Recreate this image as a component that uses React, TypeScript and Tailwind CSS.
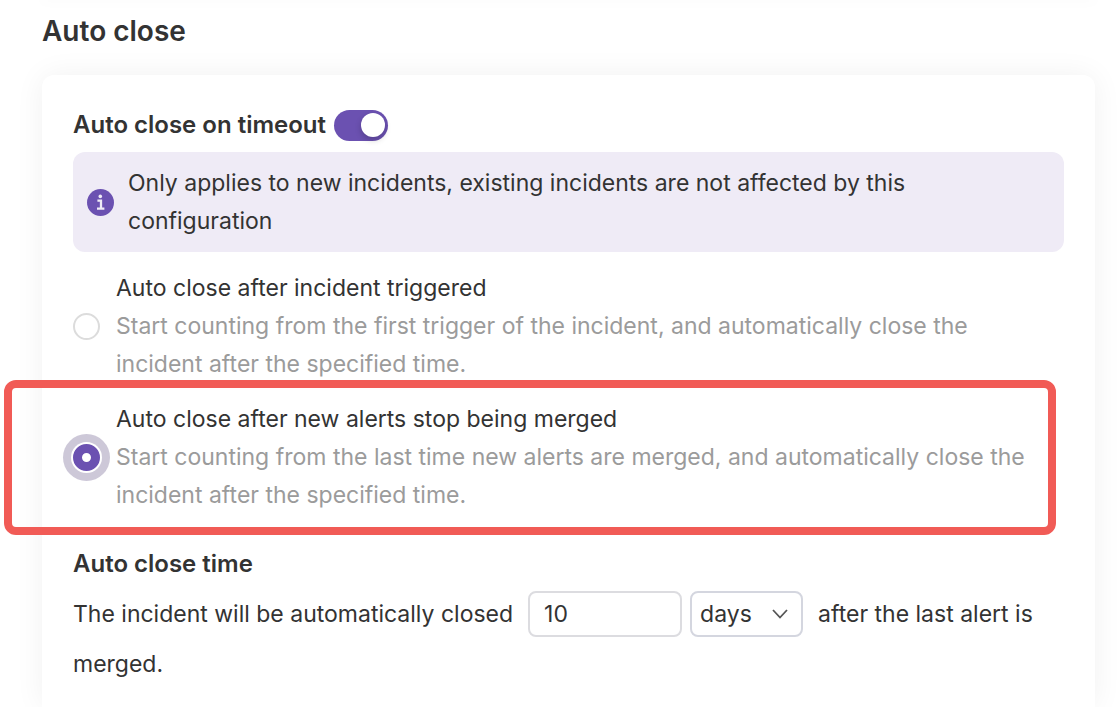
import { useState } from 'react';
import type { ReactNode } from 'react';

type CloseMode = 'triggered' | 'merged';

interface OptionProps {
  value: CloseMode;
  selected: CloseMode;
  title: string;
  description: string;
  onSelect: (value: CloseMode) => void;
  children?: ReactNode;
}

function Option({ value, selected, title, description, onSelect, children }: OptionProps) {
  return (
    <div className="relative">
      <label className="flex items-center gap-4 pr-6">
        <input
          type="radio"
          name="close-mode"
          value={value}
          checked={selected === value}
          onChange={() => onSelect(value)}
          className="m-0 size-[27px] shrink-0 appearance-none rounded-full border-2 border-[#dcdcdc] bg-white checked:border-[9px] checked:border-[#6b51b1] checked:shadow-[0_0_0_2px_#fff,0_0_0_10px_#cdc8d8]"
        />
        <span>
          <span className="block">{title}</span>
          <span className="block text-[#9b9b9b]">{description}</span>
        </span>
      </label>
      {children}
    </div>
  );
}

function InfoIcon() {
  return (
    <svg className="size-[27px] shrink-0" viewBox="0 0 27 27" aria-hidden="true">
      <circle cx="13.5" cy="13.5" r="13.5" fill="#6b51b1" />
      <circle cx="13.3" cy="7.4" r="1.8" fill="#efebf6" />
      <path d="M10.4 11.6h3.6v8M10 19.6h7.4" fill="none" stroke="#efebf6" strokeWidth="2.3" />
    </svg>
  );
}

export default function App() {
  const [enabled, setEnabled] = useState(true);
  const [mode, setMode] = useState<CloseMode>('merged');
  const [amount, setAmount] = useState('10');
  const [unit, setUnit] = useState('days');

  return (
    <main className="flex min-h-screen flex-col overflow-hidden bg-white pr-[25px] pl-[42px] font-['Inter','Liberation_Sans',sans-serif] text-[23px] leading-[38px] text-[#333]">
      <div className="h-0 shadow-[0_0_12px_2px_rgba(0,0,0,0.03)]" />
      <h1 className="pt-3 text-[28px] font-semibold">Auto close</h1>

      <section className="mt-[25px] flex-1 rounded-t-xl bg-white px-[31px] pt-[31px] pb-4 shadow-[0_0_30px_rgba(0,0,0,0.06)]">
        <div className="flex items-center gap-2">
          <h2 id="timeout-label" className="text-2xl leading-[38px] font-semibold">
            Auto close on timeout
          </h2>
          <button
            type="button"
            role="switch"
            aria-checked={enabled}
            aria-labelledby="timeout-label"
            onClick={() => setEnabled(!enabled)}
            className={
              enabled
                ? 'flex h-[31px] w-[54px] items-center justify-end rounded-full bg-[#6b51b1] px-[3px]'
                : 'flex h-[31px] w-[54px] items-center justify-start rounded-full bg-[#cfcfcf] px-[3px]'
            }
          >
            <span className="size-6 rounded-full bg-white shadow-[0_3px_6px_rgba(0,0,0,0.2)]" />
          </button>
        </div>

        <div className="mt-2 flex items-center gap-[14px] rounded-xl bg-[#efebf6] py-3 pr-24 pl-[14px]">
          <InfoIcon />
          <p>Only applies to new incidents, existing incidents are not affected by this configuration</p>
        </div>

        <div className="mt-[17px] flex flex-col gap-[17px]">
          <Option
            value="triggered"
            selected={mode}
            onSelect={setMode}
            title="Auto close after incident triggered"
            description="Start counting from the first trigger of the incident, and automatically close the incident after the specified time."
          />
          <Option
            value="merged"
            selected={mode}
            onSelect={setMode}
            title="Auto close after new alerts stop being merged"
            description="Start counting from the last time new alerts are merged, and automatically close the incident after the specified time."
          >
            <div className="pointer-events-none absolute -top-5 right-2 -bottom-[21px] -left-[69px] rounded-xl border-8 border-[#f15b56]" />
          </Option>
        </div>

        <h2 className="mt-[31px] text-2xl leading-[38px] font-semibold">Auto close time</h2>
        <div className="mt-2 flex flex-wrap items-center">
          <label htmlFor="close-amount">The incident will be automatically closed</label>
          <input
            id="close-amount"
            type="text"
            value={amount}
            onChange={(e) => setAmount(e.target.value)}
            className="ml-[15px] h-[46px] w-[154px] rounded-lg border-2 border-[#dcdce0] bg-white px-[14px]"
          />
          <div className="relative ml-2">
            <select
              aria-label="Time unit"
              value={unit}
              onChange={(e) => setUnit(e.target.value)}
              className="block h-[46px] w-[113px] appearance-none rounded-lg border-2 border-[#d4d6df] bg-white px-2"
            >
              <option>days</option>
              <option>hours</option>
            </select>
            <svg
              className="pointer-events-none absolute top-[17px] right-[15px] h-3 w-4"
              viewBox="0 0 16 12"
              fill="none"
              stroke="#555"
              strokeWidth="1.8"
              aria-hidden="true"
            >
              <path d="M1 2l7 7.5L15 2" />
            </svg>
          </div>
          <span className="ml-[15px]">after the last alert is</span>
          <span className="mt-2">merged.</span>
        </div>
      </section>
    </main>
  );
}
